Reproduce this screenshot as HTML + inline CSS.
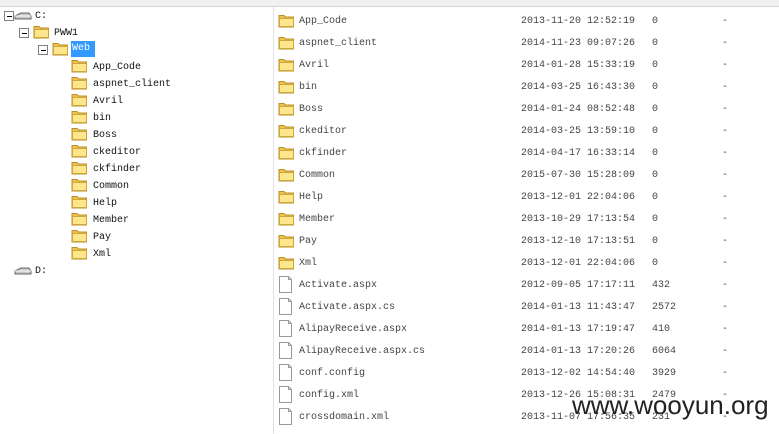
<!DOCTYPE html><html><head><meta charset="utf-8"><style>
html,body{margin:0;width:779px;height:434px;overflow:hidden}
body{background:#fff;font-family:"Liberation Mono","Noto Sans CJK SC",monospace;font-size:10px;position:relative}
.a{position:absolute;white-space:pre;line-height:12px}
.hdr{position:absolute;left:0;top:0;width:779px;height:6px;background:#f0f0f0;border-bottom:1px solid #d5d5d5}
.sep{position:absolute;left:273px;top:7px;width:1px;height:427px;background:#e2e2e2}
.box{position:absolute;width:8px;height:8px;border:1px solid #808080;background:#fff}
.box:after{content:"";position:absolute;left:2px;top:4px;width:5px;height:1px;background:#000}
svg{position:absolute}
.t{color:#111}.r{color:#444}
</style></head><body>
<div class="hdr"></div><div class="sep"></div>
<svg width="0" height="0"><defs>
<g id="f"><path d="M1 2.5h5l1.5 1.5h8v10H1z" fill="#f0c24a" stroke="#b8902a" stroke-width="1"/><rect x="1.5" y="5.5" width="14" height="8" fill="#fde68c" stroke="#d0a53a"/></g>
<g id="d"><path d="M1.5 0.5h9l3 3v13h-12z" fill="#fff" stroke="#999"/><path d="M10.5 0.5v3h3" fill="none" stroke="#999"/></g>
<g id="h"><path d="M1 7l6-3h8l2 3v3H1z" fill="#c8c8c8" stroke="#666"/><path d="M1 7h16" stroke="#fff"/></g>
</defs></svg>
<div class="box" style="left:4px;top:11px"></div>
<svg style="left:14px;top:9px" width="18" height="12"><use href="#h"/></svg>
<div class="a t" style="left:35px;top:11px">C:</div>
<div class="box" style="left:19px;top:28px"></div>
<svg style="left:33px;top:24px" width="17" height="15"><use href="#f"/></svg>
<div class="a t" style="left:54px;top:28px">PWW1</div>
<div class="box" style="left:38px;top:45px"></div>
<svg style="left:52px;top:41px" width="17" height="15"><use href="#f"/></svg>
<div class="a" style="left:71px;top:41px;width:23px;height:16px;background:#3399ff;color:#fff;line-height:16px;padding-left:1px">Web</div>
<div id="tree"></div>
<svg style="left:14px;top:264px" width="18" height="12"><use href="#h"/></svg>
<div class="a t" style="left:35px;top:266px">D:</div>
<div id="list"></div>
<div class="a" style="left:572px;top:390px;font-family:'Liberation Sans',sans-serif;font-size:26px;line-height:30px;color:#222">www.wooyun.org</div>
<script>
var n=["App_Code","aspnet_client","Avril","bin","Boss","ckeditor","ckfinder","Common","Help","Member","Pay","Xml"];
var t="";n.forEach(function(s,i){var y=62+i*17;t+='<svg style="left:71px;top:'+(y-4)+'px" width="17" height="15"><use href="#f"/></svg><div class="a t" style="left:93px;top:'+y+'px">'+s+'</div>';});
document.getElementById("tree").innerHTML=t;
var r=[["App_Code","2013-11-20 12:52:19","0"],["aspnet_client","2014-11-23 09:07:26","0"],["Avril","2014-01-28 15:33:19","0"],["bin","2014-03-25 16:43:30","0"],["Boss","2014-01-24 08:52:48","0"],["ckeditor","2014-03-25 13:59:10","0"],["ckfinder","2014-04-17 16:33:14","0"],["Common","2015-07-30 15:28:09","0"],["Help","2013-12-01 22:04:06","0"],["Member","2013-10-29 17:13:54","0"],["Pay","2013-12-10 17:13:51","0"],["Xml","2013-12-01 22:04:06","0"],["Activate.aspx","2012-09-05 17:17:11","432"],["Activate.aspx.cs","2014-01-13 11:43:47","2572"],["AlipayReceive.aspx","2014-01-13 17:19:47","410"],["AlipayReceive.aspx.cs","2014-01-13 17:20:26","6064"],["conf.config","2013-12-02 14:54:40","3929"],["config.xml","2013-12-26 15:08:31","2479"],["crossdomain.xml","2013-11-07 17:56:35","231"]];
var h="";r.forEach(function(e,i){var y=16+i*22;var fo=i<12;
h+='<svg style="left:278px;top:'+(fo?y-3:y-4)+'px" width="17" height="18"><use href="#'+(fo?'f':'d')+'"/></svg>';
h+='<div class="a r" style="left:299px;top:'+y+'px">'+e[0]+'</div><div class="a r" style="left:521px;top:'+y+'px">'+e[1]+'</div><div class="a r" style="left:652px;top:'+y+'px">'+e[2]+'</div><div class="a r" style="left:722px;top:'+y+'px">-</div>';});
document.getElementById("list").innerHTML=h;
</script>
</body></html>
